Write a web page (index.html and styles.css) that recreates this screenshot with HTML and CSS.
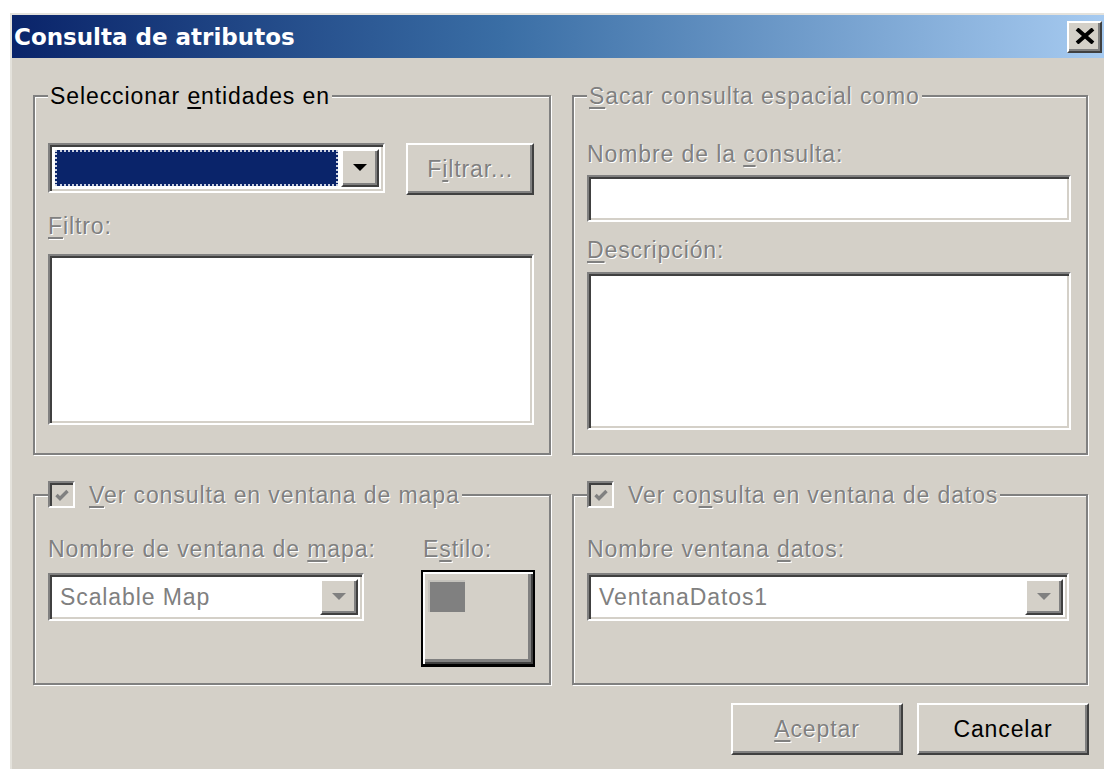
FILE: index.html
```html
<!DOCTYPE html>
<html lang="es">
<head>
<meta charset="utf-8">
<title>Consulta de atributos</title>
<link rel="stylesheet" href="styles.css">
</head>
<body>
<div class="dialog">
  <div class="titlebar">
    <span class="title">Consulta de atributos</span>
    <button class="close raised" aria-label="Cerrar">
      <svg width="20" height="16" viewBox="0 0 20 16"><path d="M2 1 L18 15 M18 1 L2 15" stroke="#000" stroke-width="4" fill="none"/></svg>
    </button>
  </div>

  <div class="dialog-body">
    <div class="groups">
      <fieldset class="group group-select">
        <legend>Seleccionar <u>e</u>ntidades en</legend>
        <div class="combo-row">
          <div class="combo sunken combo-source">
            <div class="combo-value"><span class="selection"></span></div>
            <span class="combo-btn raised">
              <svg width="14" height="8" viewBox="0 0 14 8"><path d="M0 0 H14 L7 7 Z" fill="#000"/></svg>
            </span>
          </div>
          <button class="btn raised btn-filter disabled">F<u>i</u>ltrar...</button>
        </div>
        <label class="lbl lbl-filter disabled"><u>F</u>iltro:</label>
        <div class="sunken area area-filter"></div>
      </fieldset>

      <fieldset class="group group-output">
        <legend class="disabled"><u>S</u>acar consulta espacial como</legend>
        <label class="lbl disabled">Nombre de la <u>c</u>onsulta:</label>
        <div class="sunken input-name"></div>
        <label class="lbl lbl-desc disabled"><u>D</u>escripción:</label>
        <div class="sunken area area-desc"></div>
      </fieldset>

      <fieldset class="group group-map">
        <legend class="check-legend">
          <span class="check sunken">
            <svg width="16" height="16" viewBox="0 0 16 16"><path d="M2.5 8 L6 11.5 L13.5 4" stroke="#808080" stroke-width="3.4" fill="none"/></svg>
          </span>
          <span class="disabled"><u>V</u>er consulta en ventana de mapa</span>
        </legend>
        <div class="map-row">
          <div class="map-col">
            <label class="lbl disabled">Nombre de ventana de <u>m</u>apa:</label>
            <div class="combo sunken combo-map">
              <div class="combo-text disabled">Scalable Map</div>
              <span class="combo-btn raised">
                <svg width="14" height="8" viewBox="0 0 14 8"><path d="M0 0 H14 L7 7 Z" fill="#808080"/></svg>
              </span>
            </div>
          </div>
          <div class="style-col">
            <label class="lbl disabled">E<u>s</u>tilo:</label>
            <button class="style-btn" aria-label="Estilo"><span class="swatch"></span></button>
          </div>
        </div>
      </fieldset>

      <fieldset class="group group-data">
        <legend class="check-legend">
          <span class="check sunken">
            <svg width="16" height="16" viewBox="0 0 16 16"><path d="M2.5 8 L6 11.5 L13.5 4" stroke="#808080" stroke-width="3.4" fill="none"/></svg>
          </span>
          <span class="disabled">Ver co<u>n</u>sulta en ventana de datos</span>
        </legend>
        <label class="lbl disabled">Nombre ventana <u>d</u>atos:</label>
        <div class="combo sunken combo-data">
          <div class="combo-text disabled">VentanaDatos1</div>
          <span class="combo-btn raised">
            <svg width="14" height="8" viewBox="0 0 14 8"><path d="M0 0 H14 L7 7 Z" fill="#808080"/></svg>
          </span>
        </div>
      </fieldset>
    </div>

    <div class="actions">
      <button class="btn raised btn-action disabled"><u>A</u>ceptar</button>
      <button class="btn raised btn-action">Cancelar</button>
    </div>
  </div>
</div>
</body>
</html>
```

FILE: styles.css
```css
* {
  box-sizing: border-box;
}

html,
body {
  margin: 0;
  height: 100%;
}

body {
  background: #fff;
  overflow: hidden;
  font-family: "Liberation Sans", Arial, sans-serif;
  font-size: 23px;
  letter-spacing: 0.9px;
  line-height: 26px;
  color: #000;
}

u {
  text-decoration-thickness: 2px;
  text-underline-offset: 3px;
}

/* window frame */
.dialog {
  margin: 13px 0 0 10px;
  width: 1096px;
  height: 760px;
  background: #d4d0c8;
  border: 2px solid #d4d0c8;
  border-top-color: #e4e2dc;
  border-left-color: #e4e2dc;
}

.titlebar {
  height: 43px;
  display: flex;
  align-items: center;
  justify-content: space-between;
  padding: 0 2px 0 2px;
  background: linear-gradient(to right, #0a246a 0%, #3a6ea5 45%, #a6caf0 100%);
}

.title {
  color: #fff;
  font-family: "DejaVu Sans", Verdana, sans-serif;
  font-weight: bold;
  font-size: 23px;
  letter-spacing: 0;
}

button {
  font: inherit;
  letter-spacing: inherit;
  color: inherit;
  padding: 0;
  margin: 0;
}

/* 3D bevels */
.raised {
  background: #d4d0c8;
  border: 2px solid;
  border-color: #fff #404040 #404040 #fff;
  box-shadow: inset -2px -2px #808080;
}

.sunken {
  background: #fff;
  border: 2px solid;
  border-color: #808080 #fff #fff #808080;
  box-shadow: inset 2px 2px #404040, inset -2px -2px #d4d0c8;
}

.disabled {
  color: #808080;
  text-shadow: 1px 1px 0 #fff;
}

.close {
  width: 35px;
  height: 32px;
  display: flex;
  align-items: center;
  justify-content: center;
  padding-bottom: 1px;
}

.dialog-body {
  padding: 25px 0 0 21px;
}

.groups {
  display: grid;
  grid-template-columns: 518px 516px;
  grid-template-rows: 372px 204px;
  column-gap: 21px;
  row-gap: 26px;
}

/* etched group frames */
.group {
  margin: 0;
  min-width: 0;
  border: 2px solid #808080;
  box-shadow: inset 1px 1px #fff, 1px 1px #fff;
  padding: 0 15px 0 13px;
}

.group legend {
  padding: 0 2px;
  background: #d4d0c8;
  line-height: 26px;
  white-space: nowrap;
}

.group .check-legend {
  display: flex;
  align-items: center;
  gap: 14px;
  padding: 0 2px 0 0;
}

.lbl {
  display: block;
  line-height: 26px;
  white-space: nowrap;
}

/* Seleccionar entidades en */
.group-select {
  padding-top: 34px;
}

.combo-row {
  display: flex;
  align-items: flex-start;
  gap: 21px;
  height: 52px;
}

.combo {
  display: flex;
  align-items: stretch;
  height: 50px;
  padding: 4px;
}

.combo-source {
  width: 338px;
}

.combo-value {
  flex: 1;
  padding: 1px 3px 1px 1px;
  display: flex;
}

.selection {
  flex: 1;
  background: #0a246a;
  border: 2px dotted #c9cfe0;
}

.combo-btn {
  width: 38px;
  display: flex;
  align-items: center;
  justify-content: center;
}

.combo-text {
  flex: 1;
  padding-left: 6px;
  display: flex;
  align-items: center;
  white-space: nowrap;
}

.btn-filter {
  width: 128px;
  height: 52px;
}

.lbl-filter {
  margin-top: 18px;
}

.area-filter {
  margin-top: 15px;
  height: 171px;
}

/* Sacar consulta espacial como */
.group-output {
  padding-top: 32px;
}

.input-name {
  margin-top: 8px;
  height: 47px;
}

.lbl-desc {
  margin-top: 15px;
}

.area-desc {
  margin-top: 9px;
  height: 158px;
}

/* Ver consulta en ventana de mapa */
.group-map,
.group-data {
  padding-top: 28px;
}

.check {
  width: 27px;
  height: 27px;
  flex: none;
  background: #d4d0c8;
  display: flex;
  align-items: center;
  justify-content: center;
}

.map-row {
  display: flex;
  gap: 57px;
}

.map-col {
  width: 316px;
  flex: none;
}

.combo-map {
  margin-top: 11px;
  height: 48px;
}

.style-col .lbl {
  padding-left: 2px;
}

.style-btn {
  margin-top: 8px;
  width: 114px;
  height: 97px;
  display: flex;
  align-items: flex-start;
  padding: 8px 0 0 5px;
  background: #d4d0c8;
  border: 2px solid #000;
  border-bottom-width: 3px;
  box-shadow: inset 2px 2px #fff, inset -2px -2px #404040, inset -5px -5px #808080;
}

.swatch {
  width: 37px;
  height: 32px;
  background: #808080;
  box-shadow: inset 2px 2px #c4c2bc;
}

/* Ver consulta en ventana de datos */
.combo-data {
  margin-top: 11px;
  height: 48px;
  width: 482px;
}

/* dialog buttons */
.actions {
  width: 1056px;
  margin-top: 18px;
  display: flex;
  justify-content: flex-end;
  gap: 14px;
}

.btn-action {
  width: 172px;
  height: 52px;
}
```
